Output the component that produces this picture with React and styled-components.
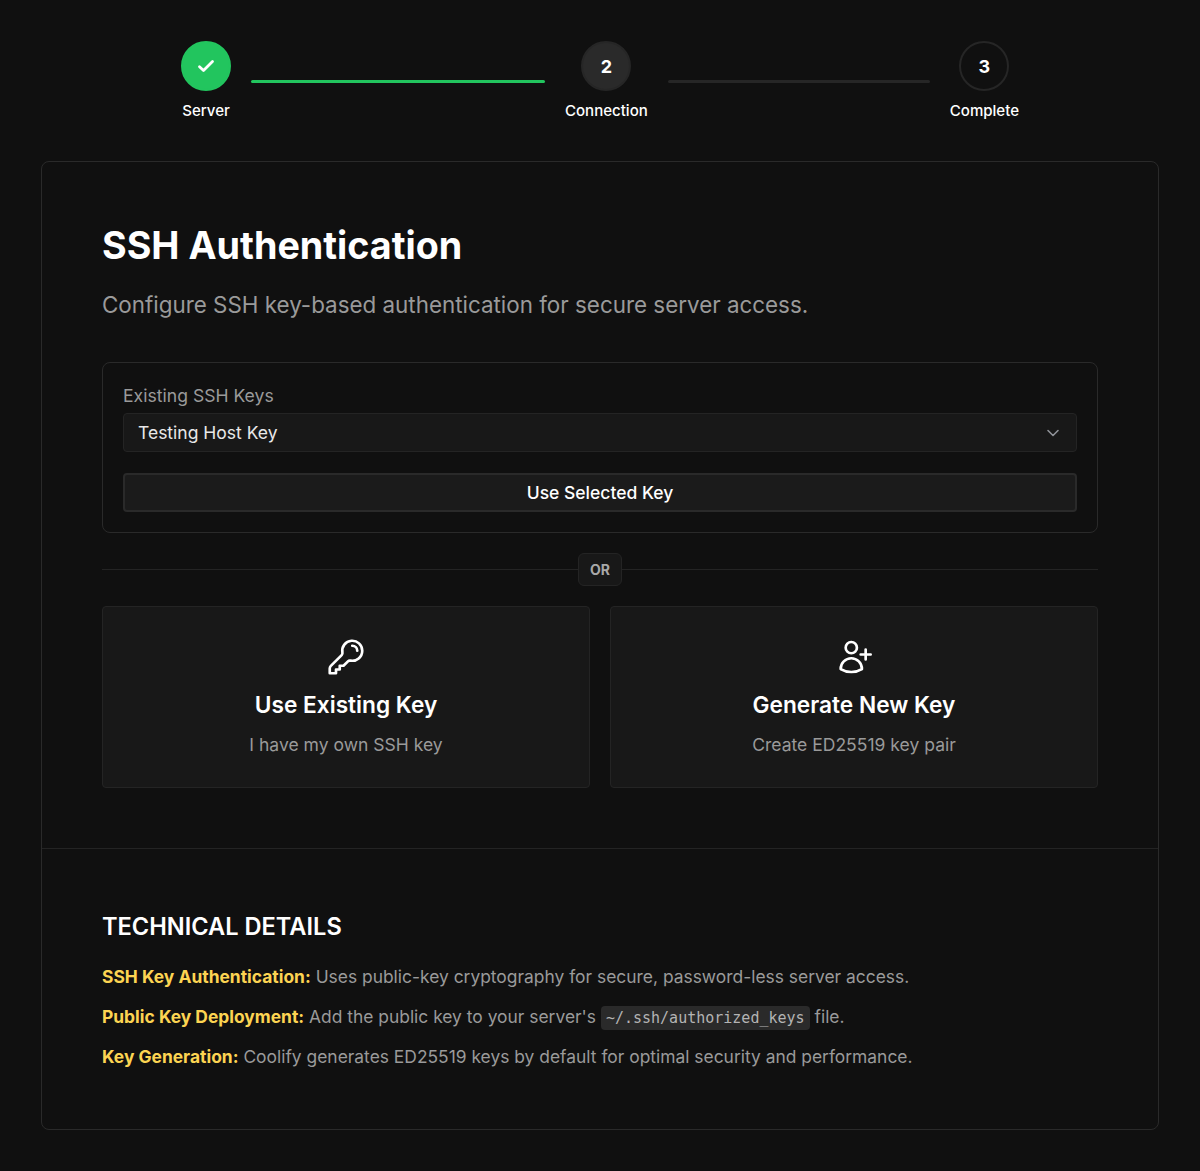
import React from 'react';
import styled, { createGlobalStyle } from 'styled-components';

const GlobalStyle = createGlobalStyle`
  * { box-sizing: border-box; }
  body {
    margin: 0;
    background: #101010;
    color: #fff;
    font-family: Inter, "Liberation Sans", sans-serif;
  }
`;

const Page = styled.div`
  width: 1200px;
  height: 1171px;
  padding: 41px 41px 0;
`;

const Stepper = styled.div`
  display: flex;
  align-items: flex-start;
  width: 838px;
  margin: 0 auto 40px;
`;

const Step = styled.div`
  display: flex;
  flex-direction: column;
  align-items: center;
  gap: 10px;
`;

const Circle = styled.div`
  width: 50px;
  height: 50px;
  border-radius: 50%;
  display: flex;
  align-items: center;
  justify-content: center;
  font-size: 18px;
  font-weight: 700;
  color: #fff;
  background: ${({ $state }) => ($state === 'done' ? '#22c55e' : $state === 'active' ? '#2a2a2a' : '#101010')};
  border: 2px solid ${({ $state }) => ($state === 'done' ? '#22c55e' : '#262626')};
`;

const StepLabel = styled.div`
  font-size: 15.05px;
  line-height: 20px;
  font-weight: 450;
  white-space: nowrap;
`;

const Line = styled.div`
  width: ${({ $w }) => $w}px;
  height: 3px;
  margin: 39px 20px 0;
  border-radius: 2px;
  background: ${({ $done }) => ($done ? '#22c55e' : '#262626')};
`;

const Card = styled.div`
  width: 1118px;
  height: 969px;
  border: 1px solid #2a2a2a;
  border-radius: 8px;
`;

const Main = styled.div`
  padding: 61px 60px 60px;
  border-bottom: 1px solid #242424;
`;

const Title = styled.h1`
  margin: 0;
  font-size: 37.7px;
  line-height: 44px;
  font-weight: 700;
`;

const Subtitle = styled.p`
  margin: 22px 0 41px;
  font-size: 22.4px;
  line-height: 32px;
  color: #9a9a9a;
`;

const KeyPanel = styled.div`
  height: 171px;
  padding: 21px 20px 20px;
  border: 1px solid #2a2a2a;
  border-radius: 8px;
`;

const FieldLabel = styled.div`
  font-size: 17.6px;
  line-height: 24px;
  color: #9a9a9a;
  margin-bottom: 5px;
`;

const Select = styled.div`
  height: 39px;
  padding: 0 15px 0 14px;
  display: flex;
  align-items: center;
  justify-content: space-between;
  background: #181818;
  border: 1px solid #242424;
  border-radius: 4px;
  font-size: 17.5px;
  color: #e8e8e8;
`;

const Chevron = styled.svg`
  width: 16px;
  height: 16px;
  fill: none;
  stroke: #8f9298;
  stroke-width: 2.4;
  stroke-linecap: round;
  stroke-linejoin: round;
`;

const WideButton = styled.button`
  display: block;
  width: 100%;
  height: 39px;
  margin-top: 21px;
  background: #1b1b1b;
  border: 2px solid #2a2a2a;
  border-radius: 4px;
  font-family: inherit;
  font-size: 17.5px;
  font-weight: 500;
  color: #fff;
`;

const Divider = styled.div`
  display: flex;
  align-items: center;
  margin: 20px 0;
  &::before,
  &::after {
    content: '';
    flex: 1;
    height: 1px;
    background: #242424;
  }
`;

const OrBadge = styled.div`
  width: 44px;
  height: 33px;
  display: flex;
  align-items: center;
  justify-content: center;
  background: #181818;
  border: 1px solid #242424;
  border-radius: 6px;
  font-size: 14px;
  font-weight: 700;
  color: #a8a8a8;
`;

const Options = styled.div`
  display: grid;
  grid-template-columns: 1fr 1fr;
  gap: 20px;
`;

const Option = styled.div`
  height: 182px;
  padding-top: 30px;
  display: flex;
  flex-direction: column;
  align-items: center;
  background: #181818;
  border: 1px solid #242424;
  border-radius: 4px;
`;

const OptionIcon = styled.svg`
  width: 40px;
  height: 40px;
  fill: none;
  stroke: #fff;
  stroke-width: 1.6;
  stroke-linecap: round;
  stroke-linejoin: round;
`;

const OptionTitle = styled.div`
  margin-top: 12px;
  font-size: 22.7px;
  line-height: 32px;
  font-weight: 600;
`;

const OptionText = styled.div`
  margin-top: 10px;
  font-size: 17.55px;
  line-height: 28px;
  color: #9a9a9a;
`;

const Details = styled.div`
  padding: 62px 60px 0;
`;

const DetailsTitle = styled.h2`
  margin: 0 0 19px;
  font-size: 23.6px;
  line-height: 32px;
  font-weight: 600;
  text-transform: uppercase;
`;

const DetailRow = styled.p`
  margin: 0 0 10px;
  height: 30px;
  font-size: 17.42px;
  line-height: 30px;
  color: #9a9a9a;
  white-space: nowrap;
`;

const Strong = styled.strong`
  color: #fcd452;
  font-weight: 700;
`;

const Code = styled.code`
  padding: 3px 5px;
  background: #2a2a2a;
  border-radius: 4px;
  font-family: "DejaVu Sans Mono", monospace;
  font-size: 15px;
  color: #b4b4b4;
`;

const Check = styled.svg`
  width: 24px;
  height: 24px;
  fill: none;
  stroke: #fff;
  stroke-width: 2.8;
  stroke-linecap: round;
  stroke-linejoin: round;
`;

const App = () => {
  return (
    <Page>
      <GlobalStyle />
      <Stepper>
        <Step>
          <Circle $state="done">
            <Check viewBox="0 0 24 24">
              <path d="M5.5 12.8l4 3.7 9-9" />
            </Check>
          </Circle>
          <StepLabel>Server</StepLabel>
        </Step>
        <Line $w={294} $done />
        <Step>
          <Circle $state="active">2</Circle>
          <StepLabel>Connection</StepLabel>
        </Step>
        <Line $w={262} />
        <Step>
          <Circle>3</Circle>
          <StepLabel>Complete</StepLabel>
        </Step>
      </Stepper>

      <Card>
        <Main>
          <Title>SSH Authentication</Title>
          <Subtitle>Configure SSH key-based authentication for secure server access.</Subtitle>
          <KeyPanel>
            <FieldLabel>Existing SSH Keys</FieldLabel>
            <Select>
              Testing Host Key
              <Chevron viewBox="0 0 24 24">
                <path d="M19.5 8.25l-7.5 7.5-7.5-7.5" />
              </Chevron>
            </Select>
            <WideButton>Use Selected Key</WideButton>
          </KeyPanel>
          <Divider>
            <OrBadge>OR</OrBadge>
          </Divider>
          <Options>
            <Option>
              <OptionIcon viewBox="0 0 24 24">
                <path d="M15.75 5.25a3 3 0 013 3m3 0a6 6 0 01-7.029 5.912c-.563-.097-1.159.026-1.563.43L10.5 17.25H8.25v2.25H6v2.25H2.25v-2.818c0-.597.237-1.17.659-1.591l6.499-6.499c.404-.404.527-1 .43-1.563A6 6 0 1121.75 8.25z" />
              </OptionIcon>
              <OptionTitle>Use Existing Key</OptionTitle>
              <OptionText>I have my own SSH key</OptionText>
            </Option>
            <Option>
              <OptionIcon viewBox="0 0 24 24">
                <path d="M19 7.5v3m0 0v3m0-3h3m-3 0h-3m-2.25-4.125a3.375 3.375 0 11-6.75 0 3.375 3.375 0 016.75 0zM4 19.235v-.11a6.375 6.375 0 0112.75 0v.109A12.318 12.318 0 0110.374 21c-2.331 0-4.512-.645-6.374-1.766z" />
              </OptionIcon>
              <OptionTitle>Generate New Key</OptionTitle>
              <OptionText>Create ED25519 key pair</OptionText>
            </Option>
          </Options>
        </Main>
        <Details>
          <DetailsTitle>Technical Details</DetailsTitle>
          <DetailRow>
            <Strong>SSH Key Authentication:</Strong> Uses public-key cryptography for secure, password-less server access.
          </DetailRow>
          <DetailRow>
            <Strong>Public Key Deployment:</Strong> Add the public key to your server's <Code>~/.ssh/authorized_keys</Code> file.
          </DetailRow>
          <DetailRow>
            <Strong>Key Generation:</Strong> Coolify generates ED25519 keys by default for optimal security and performance.
          </DetailRow>
        </Details>
      </Card>
    </Page>
  );
};

export default App;
